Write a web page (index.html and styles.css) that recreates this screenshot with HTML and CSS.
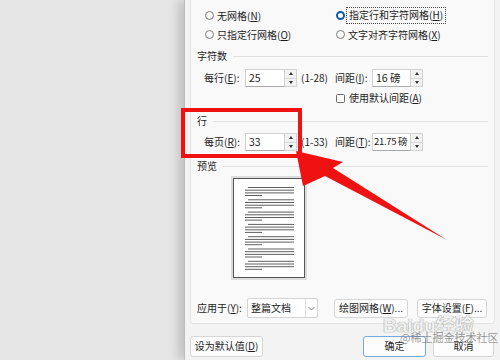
FILE: index.html
```html
<!DOCTYPE html>
<html lang="zh">
<head>
<meta charset="utf-8">
<link rel="stylesheet" href="styles.css">
</head>
<body>
<div class="desk"></div>
<div class="dialog">
  <div class="panel">
    <div class="radios">
      <div class="radio"><span class="dot"></span><span>无网格(<u>N</u>)</span></div>
      <div class="radio on"><span class="dot"></span><span class="focus">指定行和字符网格(<u>H</u>)</span></div>
      <div class="radio"><span class="dot"></span><span>只指定行网格(<u>O</u>)</span></div>
      <div class="radio"><span class="dot"></span><span>文字对齐字符网格(<u>X</u>)</span></div>
    </div>

    <div class="sec">字符数</div>
    <div class="frow">
      <span class="lbl">每行(<u>E</u>):</span>
      <span class="field w40">25</span><span class="spin"><i class="up"></i><i class="down"></i></span>
      <span class="range">(1-28)</span>
      <span class="lbl2">间距(<u>I</u>):</span>
      <span class="field w39">16 磅</span><span class="spin"><i class="up"></i><i class="down"></i></span>
    </div>
    <div class="crow"><span class="box"></span>使用默认间距(<u>A</u>)</div>

    <div class="sec sec-row">行</div>
    <div class="frow frow2">
      <span class="lbl">每页(<u>R</u>):</span>
      <span class="field w40">33</span><span class="spin"><i class="up"></i><i class="down"></i></span>
      <span class="range">(1-33)</span>
      <span class="lbl2">间距(<u>T</u>):</span>
      <span class="field w39 tight">21.75 磅</span><span class="spin"><i class="up"></i><i class="down"></i></span>
    </div>

    <div class="sec sec-row">预览</div>
    <div class="page">
      <svg width="70" height="98" viewBox="0 0 70 98">
        <g stroke="#5f5f5f" stroke-width="1">
          <path d="M14 8.5H60M11 11.2H60M11 13.9H60M11 16.5H28"/>
          <path d="M14 20.8H60M11 23.5H60M11 26.2H60M11 28.8H28"/>
          <path d="M14 33.1H60M11 35.8H60M11 38.5H60M11 41.1H28"/>
          <path d="M14 45.4H60M11 48.1H60M11 50.8H60M11 53.4H28"/>
          <path d="M14 57.7H60M11 60.4H60M11 63.1H60M11 65.7H28"/>
          <path d="M14 70H60M11 72.7H60M11 75.4H60M11 78H28"/>
          <path d="M14 82.3H60M11 85H60M11 87.7H60M11 90.3H28"/>
        </g>
      </svg>
    </div>

    <div class="arow">
      <span class="alabel">应用于(<u>Y</u>):</span>
      <span class="combo"><span class="ctext">整篇文档</span><span class="cbtn"><svg width="7" height="5" viewBox="0 0 7 5"><path d="M0.5 1L3.5 4L6.5 1" fill="none" stroke="#777" stroke-width="0.9"/></svg></span></span>
      <span class="btn b-grid">绘图网格(<u>W</u>)...</span>
      <span class="btn b-font">字体设置(<u>F</u>)...</span>
    </div>
  </div>

  <div class="brow">
    <span class="btn b-def">设为默认值(<u>D</u>)</span>
    <span class="btn b-ok">确定</span>
    <span class="btn b-cancel">取消</span>
  </div>
</div>

<div class="mark"></div>
<svg class="arrow" width="500" height="360" viewBox="0 0 500 360">
  <polygon points="296,151 343,162 333,168 447,240 325,176 303,186" fill="#f01212"/>
</svg>
<div class="wm"><span class="wm1">Bai<span class="paw">du</span>经验</span><span class="wm2">@稀土掘金技术社区</span></div>
</body>
</html>
```
FILE: styles.css
```css
* { box-sizing: border-box; }
html, body { margin: 0; }
body {
  width: 500px;
  height: 360px;
  overflow: hidden;
  position: relative;
  display: flex;
  background: #e6e6e6;
  font-family: "Noto Sans CJK SC", "Noto Sans", sans-serif;
  font-size: 10px;
  color: #1d1d1d;
  line-height: 1;
}
u { text-underline-offset: 1px; }

.desk { width: 184px; flex: none; }

.dialog {
  width: 316px;
  flex: none;
  background: #f3f3f3;
  border-left: 1px solid #bdbdbd;
  box-shadow: -6px 0 10px rgba(0, 0, 0, 0.16);
  padding: 0 5px;
  display: flex;
  flex-direction: column;
}

.panel {
  height: 324px;
  background: #f9f9f9;
  border: 1px solid #e4e4e4;
  border-top: none;
  border-radius: 0 0 4px 4px;
  padding: 6px 6px 0 6px;
  display: flex;
  flex-direction: column;
}

/* radios */
.radios {
  display: grid;
  grid-template-columns: 131px auto;
  grid-auto-rows: 19px;
  padding-left: 8px;
}
.radio { display: flex; align-items: center; gap: 3px; }
.dot {
  width: 9px; height: 9px;
  border-radius: 50%;
  border: 1px solid #7a7a7a;
  background: #fbfbfb;
  flex: none;
}
.radio.on .dot {
  border: 2.5px solid #0a5bb5;
  background: #fff;
}
.focus { outline: 1px dotted #444; outline-offset: 1px; padding: 1px 1px 2px; }

/* sections */
.sec {
  display: flex;
  align-items: center;
  height: 14px;
  margin-top: 5px;
}
.sec::after {
  content: "";
  flex: 1;
  height: 1px;
  background: #e2e2e2;
  margin-left: 6px;
}
.sec-row { margin-top: 8px; }

/* form rows */
.frow {
  display: flex;
  align-items: center;
  height: 18px;
  margin-top: 6px;
  padding-left: 7px;
}
.frow2 { margin-top: 5px; }
.lbl { width: 41px; }
.lbl2 { width: 37px; }
.range { width: 38px; padding-left: 4px; }
.field {
  height: 18px;
  background: #fff;
  border: 1px solid #d2d2d2;
  border-bottom-color: #a8a8a8;
  display: flex;
  align-items: center;
  padding-left: 3px;
  font-size: 10.5px;
  white-space: nowrap;
  overflow: hidden;
}
.field.tight { padding-left: 1px; font-size: 9.5px; letter-spacing: -0.3px; }
.w40 { width: 40px; }
.w39 { width: 39px; }
.spin {
  width: 12px;
  height: 18px;
  display: flex;
  flex-direction: column;
  border: 1px solid #d2d2d2;
  border-left: none;
  background: #f2f2f2;
}
.spin i {
  flex: 1;
  display: flex;
  align-items: center;
  justify-content: center;
}
.spin i + i { border-top: 1px solid #d8d8d8; }
.spin i::before {
  content: "";
  width: 0; height: 0;
  border-left: 2.5px solid transparent;
  border-right: 2.5px solid transparent;
}
.spin .up::before { border-bottom: 3px solid #333; }
.spin .down::before { border-top: 3px solid #333; }

.crow {
  display: flex;
  align-items: center;
  height: 16px;
  margin-top: 3px;
  padding-left: 139px;
}
.box {
  width: 9px; height: 9px;
  border: 1px solid #6c6c6c;
  border-radius: 1.5px;
  background: #fbfbfb;
  margin-right: 4px;
}

/* preview */
.page {
  width: 72px;
  height: 100px;
  margin: 5px 0 0 36px;
  background: #fff;
  border: 1px solid #555;
  box-shadow: 0 0 0 2px #dcdcdc;
}
.page svg { display: block; }

/* apply row */
.arow {
  display: flex;
  align-items: center;
  height: 20px;
  margin-top: 20px;
}
.alabel { width: 50px; }
.combo {
  width: 71px;
  height: 20px;
  display: flex;
  background: #fff;
  border: 1px solid #d4d4d4;
  border-radius: 2px;
}
.ctext { flex: 1; display: flex; align-items: center; padding-left: 3px; }
.cbtn {
  width: 12px;
  border-left: 1px solid #e0e0e0;
  display: flex;
  align-items: center;
  justify-content: center;
}
.btn {
  display: flex;
  align-items: center;
  justify-content: center;
  height: 19px;
  background: #fdfdfd;
  border: 1px solid #d6d6d6;
  border-radius: 3px;
  white-space: nowrap;
}
.b-grid { width: 74px; margin-left: 16px; }
.b-font { width: 70px; margin-left: 9px; }

/* bottom */
.brow {
  display: flex;
  align-items: center;
  height: 22px;
  margin-top: 11px;
}
.brow .btn { height: 21px; }
.b-def { width: 73px; }
.b-ok { width: 63px; margin-left: auto; border: 1px solid #78a9dc; }
.b-cancel { width: 61px; margin-left: 7px; margin-right: 1px; }

/* annotation overlays */
.mark {
  position: absolute;
  left: 181px;
  top: 108px;
  width: 121px;
  height: 50px;
  border: 4px solid #f01212;
}
.arrow { position: absolute; left: 0; top: 0; pointer-events: none; }

.wm {
  position: absolute;
  left: 383px;
  top: 316px;
  width: 117px;
  display: flex;
  flex-direction: column;
  pointer-events: none;
}
.wm1 {
  font-family: "Liberation Sans", "Noto Sans CJK SC", sans-serif;
  font-size: 19px;
  font-weight: bold;
  color: rgba(255, 255, 255, 0.85);
  text-shadow: 0 0 1px #9a9a9a, 0 0 1px #9a9a9a;
}
.wm2 {
  margin-top: -3px;
  margin-left: 17px;
  font-size: 11px;
  color: rgba(120, 120, 120, 0.75);
}
```
